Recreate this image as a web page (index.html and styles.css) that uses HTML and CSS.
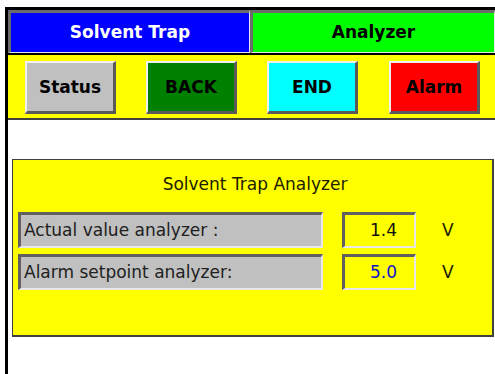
FILE: index.html
```html
<!DOCTYPE html>
<html lang="en">

<head>
    <meta charset="UTF-8">
    <meta name="viewport" content="width=device-width, initial-scale=1.0">
    <title>Solvent Trap Analyzer</title>
    <link rel="stylesheet" href="styles.css">
</head>

<body>
    <div class="screen">
        <!-- cabecera -->
        <div class="header">
            <div class="tile tile-blue">Solvent Trap</div>
            <div class="tile tile-green">Analyzer</div>
        </div>

        <!-- botones -->
        <div class="toolbar">
            <button class="btn btn-gray">Status</button>
            <button class="btn btn-green">BACK</button>
            <button class="btn btn-cyan">END</button>
            <button class="btn btn-red">Alarm</button>
        </div>

        <div class="content">
            <div class="panel">
                <div class="panel-title">Solvent Trap Analyzer</div>
                <div class="row">
                    <div class="label">Actual value analyzer :</div>
                    <div class="value">1.4</div>
                    <div class="unit">V</div>
                </div>
                <div class="row">
                    <div class="label">Alarm setpoint analyzer:</div>
                    <div class="value value-blue">5.0</div>
                    <div class="unit">V</div>
                </div>
            </div>
        </div>
    </div>
</body>

</html>
```

FILE: styles.css
```css
body {
    margin: 0;
    padding: 0;
    background: #ffffff;
    font-family: "DejaVu Sans", Verdana, sans-serif;
    overflow: hidden;
}

.screen {
    margin: 7px 0 0 5px;
    border-left: 3px solid #000000;
    border-top: 3px solid #000000;
    height: 370px;
}

.header {
    display: flex;
    border-bottom: 2px solid #000000;
}

.tile {
    height: 39px;
    line-height: 39px;
    text-align: center;
    font-weight: bold;
    font-size: 17px;
    border-top: 3px solid #6b6b6b;
    border-left: 3px solid #6b6b6b;
    border-right: 1px solid #e6e6e6;
    border-bottom: 1px solid #e6e6e6;
}

.tile-blue {
    width: 238px;
    background-color: #0000ff;
    color: #ffffff;
}

.tile-green {
    flex: 1;
    background-color: #00ff00;
    color: #000000;
}

.toolbar {
    display: flex;
    gap: 30px;
    height: 65px;
    padding: 6px 0 0 17px;
    box-sizing: border-box;
    background-color: #ffff00;
    border-bottom: 2px solid #404040;
}

.btn {
    width: 91px;
    height: 53px;
    font-family: "DejaVu Sans", Verdana, sans-serif;
    font-weight: bold;
    font-size: 17px;
    color: #000000;
    border-style: solid;
    border-width: 2px 3px 3px 2px;
    border-color: #f0f0f0 #5a5a5a #5a5a5a #f0f0f0;
    padding: 0;
}

.btn-gray {
    background-color: #c0c0c0;
}

.btn-green {
    background-color: #008000;
}

.btn-cyan {
    background-color: #00ffff;
}

.btn-red {
    background-color: #ff0000;
    margin-left: 1px;
}

.content {
    padding: 39px 0 0 4px;
}

.panel {
    width: 474px;
    height: 175px;
    background-color: #ffff00;
    border: 1px solid #404040;
    border-right-width: 2px;
    border-bottom-width: 2px;
    padding: 0 0 0 5px;
}

.panel-title {
    text-align: center;
    font-size: 17px;
    color: #202000;
    padding: 14px 0 0 0;
    height: 38px;
    line-height: 20px;
}

.row {
    display: flex;
    align-items: center;
    margin-bottom: 6px;
    font-size: 17px;
}

.label {
    width: 297px;
    height: 31px;
    line-height: 31px;
    background-color: #c0c0c0;
    color: #202020;
    padding-left: 3px;
    border-style: solid;
    border-width: 3px 2px 2px 3px;
    border-color: #606060 #e8e8e8 #e8e8e8 #606060;
}

.value {
    width: 52px;
    height: 31px;
    line-height: 31px;
    margin-left: 19px;
    padding-right: 17px;
    text-align: right;
    color: #101010;
    border-style: solid;
    border-width: 3px 2px 2px 3px;
    border-color: #606060 #e8e8e8 #e8e8e8 #606060;
}

.value-blue {
    color: #1010d0;
}

.unit {
    margin-left: 26px;
    color: #202000;
}
```
